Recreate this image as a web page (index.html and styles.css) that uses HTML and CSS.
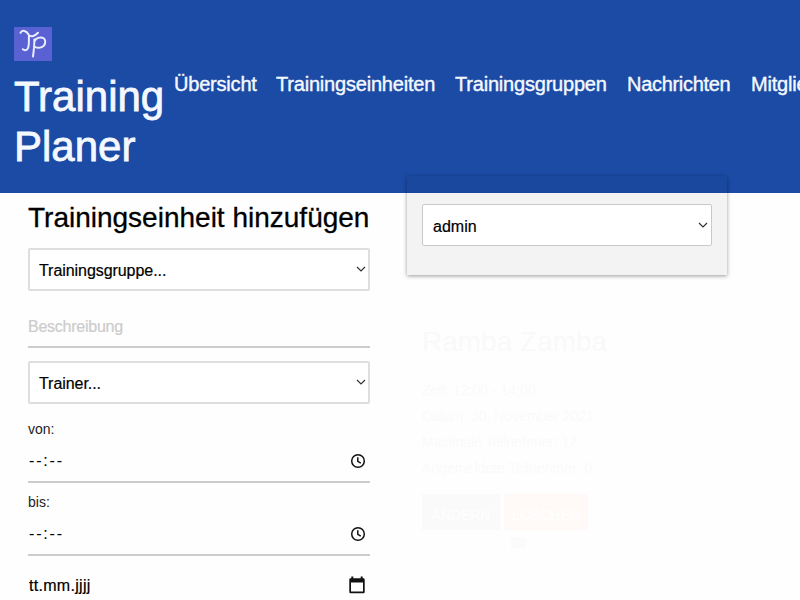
FILE: index.html
```html
<!DOCTYPE html>
<html lang="de">
<head>
<meta charset="utf-8">
<title>Training Planer</title>
<link rel="stylesheet" href="styles.css">
</head>
<body>
<header class="header">
  <div class="brand">
    <svg class="logo" viewBox="0 0 38 34"><rect width="38" height="34" fill="#5961d3"/><g fill="none" stroke="#e9edff" stroke-width="2" stroke-linecap="round" stroke-linejoin="round"><path d="M6.500 5.800C8 2.500 12.500 3.500 14.500 7.500C16.500 10.500 20.500 9.500 24 5.800M15 8.500C14.500 13 15.800 19 13.500 22C12.200 23.800 10 23.200 8.800 22.200"/><path d="M20.300 12.500C20.500 18 19.800 23.500 19 29.500M20.300 15C22 9.500 31 8.500 31.200 14.500C31.400 20 25 22.500 20.500 19.500"/></g></svg>
    <div class="brand-name">Training<br>Planer</div>
  </div>
  <nav class="nav"><a class="n1">Übersicht</a><a class="n2">Trainingseinheiten</a><a class="n3">Trainingsgruppen</a><a class="n4">Nachrichten</a><a class="n5">Mitglieder</a></nav>
</header>
<main class="main">
  <section class="form">
    <h1>Trainingseinheit hinzufügen</h1>
    <div class="select"><span>Trainingsgruppe...</span><svg class="chevron" viewBox="0 0 10 6"><path d="M1 1l4 4 4-4"/></svg></div>
    <div class="line-input placeholder"><span>Beschreibung</span></div>
    <div class="select trainer"><span>Trainer...</span><svg class="chevron" viewBox="0 0 10 6"><path d="M1 1l4 4 4-4"/></svg></div>
    <label class="label">von:</label>
    <div class="time"><span>--:--</span><svg class="clock" viewBox="0 0 16 16"><circle cx="8" cy="8" r="6.300"/><path d="M7.800 4.200v4.200l3 1.800"/></svg></div>
    <label class="label">bis:</label>
    <div class="time"><span>--:--</span><svg class="clock" viewBox="0 0 16 16"><circle cx="8" cy="8" r="6.300"/><path d="M7.800 4.200v4.200l3 1.800"/></svg></div>
    <div class="date"><span>tt.mm.jjjj</span><svg class="calendar" viewBox="0 0 16 18"><path fill-rule="evenodd" d="M2.300.5h2v1.700h7.400V.5h2v1.700h.8q1.200 0 1.200 1.200v12.700q0 1.200-1.200 1.200h-13Q.3 17.300.3 16.100V3.400q0-1.200 1.200-1.200h.8zM2 6.400v9.200h12V6.400z"/></svg></div>
  </section>
  <div class="side">
    <div class="panel"><div class="select"><span>admin</span><svg class="chevron" viewBox="0 0 10 6"><path d="M1 1l4 4 4-4"/></svg></div></div>
    <article class="card">
      <h2>Ramba Zamba</h2>
      <p>Zeit: 12:00 - 14:00</p>
      <p>Datum: 30. November 2021</p>
      <p>Maximale Teilnehmer: 12</p>
      <p>Angemeldete Teilnehmer: 0</p>
      <div class="buttons"><button class="edit">ÄNDERN</button><button class="delete">LÖSCHEN</button></div>
      <i class="switch"></i>
    </article>
  </div>
</main>
</body>
</html>
```
FILE: styles.css
```css
* { box-sizing: border-box; }
body { margin: 0; width: 800px; height: 600px; overflow: hidden; background: #fefefe; font-family: "Liberation Sans", Arial, sans-serif; color: #000; }
.header { height: 193px; background: #1b4ba5; color: #f4f8ff; display: flex; padding: 27px 0 0 14px; overflow: hidden; }
.brand { width: 160px; flex: none; }
.logo { display: block; width: 38px; height: 34px; }
.brand-name { font-size: 42px; line-height: 50px; margin-top: 11px; -webkit-text-stroke: .8px; }
.nav { display: flex; gap: 20px; padding-top: 45px; font-size: 20px; line-height: 24px; white-space: nowrap; -webkit-text-stroke: .4px; letter-spacing: -.2px; }
.nav a { flex: none; }
.n1 { width: 82px; }
.n2 { width: 159px; }
.n3 { width: 152px; }
.n4 { width: 104px; letter-spacing: -.3px; }
.main { display: flex; padding-left: 28px; }
.form { width: 342px; margin-right: 37px; }
h1 { font-size: 28px; font-weight: 400; line-height: 34px; margin: 8px 0 13px; white-space: nowrap; -webkit-text-stroke: .3px; }
.select { height: 43px; border: 2px solid #dedede; border-radius: 2px; background: #fff; display: flex; align-items: center; justify-content: space-between; padding: 2px 2px 0 9px; font-size: 16px; letter-spacing: -.06px; -webkit-text-stroke: .2px; }
.chevron { width: 10px; height: 6px; margin-bottom: 3px; fill: none; stroke: #333; stroke-width: 1.2; }
.line-input { height: 57px; border-bottom: 2px solid #ccc; padding-top: 26px; font-size: 16px; line-height: 19px; letter-spacing: -.25px; -webkit-text-stroke: .2px; }
.placeholder { color: #ccc; }
.trainer { margin-top: 13px; }
.label { display: block; height: 36px; padding-top: 16px; font-size: 14px; line-height: 18px; color: #222; }
.time { height: 43px; border-bottom: 2px solid #ccc; display: flex; justify-content: space-between; align-items: center; padding: 0 4px 0 1px; font-size: 16px; letter-spacing: 1.8px; -webkit-text-stroke: .1px; }
.time + .label { height: 30px; padding-top: 10px; }
.clock { width: 16px; height: 16px; fill: none; stroke: #111; stroke-width: 1.5; }
.date { height: 60px; display: flex; justify-content: space-between; align-items: center; padding: 0 5px 2px 1px; font-size: 16px; letter-spacing: .3px; -webkit-text-stroke: .2px; }
.date span { padding-top: 2px; }
.calendar { width: 16px; height: 18px; fill: #111; }
.side { width: 320px; }
.panel { height: 99px; margin-top: -17px; padding: 28px 15px; box-shadow: 0 1px 4px #0006; background: linear-gradient(#1a489f 17px, #f3f3f3 17px); }
.panel .select { height: 42px; border: 1px solid #c9c9c9; padding-right: 3px; padding-top: 3px; padding-left: 10px; letter-spacing: 0; }
.card { padding: 50px 15px 0; color: #f9f9f9; }
h2 { margin: 0 0 18px; font-size: 28px; line-height: 34px; font-weight: 400; }
.card p { margin: 0; font-size: 14px; line-height: 26px; color: #fafafa; }
.buttons { display: flex; gap: 4px; margin-top: 13px; }
button { height: 36px; border: 0; padding: 6px 0 0; font: 14px "Liberation Sans", sans-serif; color: #fff; }
.edit { width: 78px; background: #fafafa; }
.delete { width: 84px; background: #fff9f8; }
.switch { display: block; width: 15px; height: 11px; margin: 7px 0 0 89px; background: #fbfbfb; }
```
